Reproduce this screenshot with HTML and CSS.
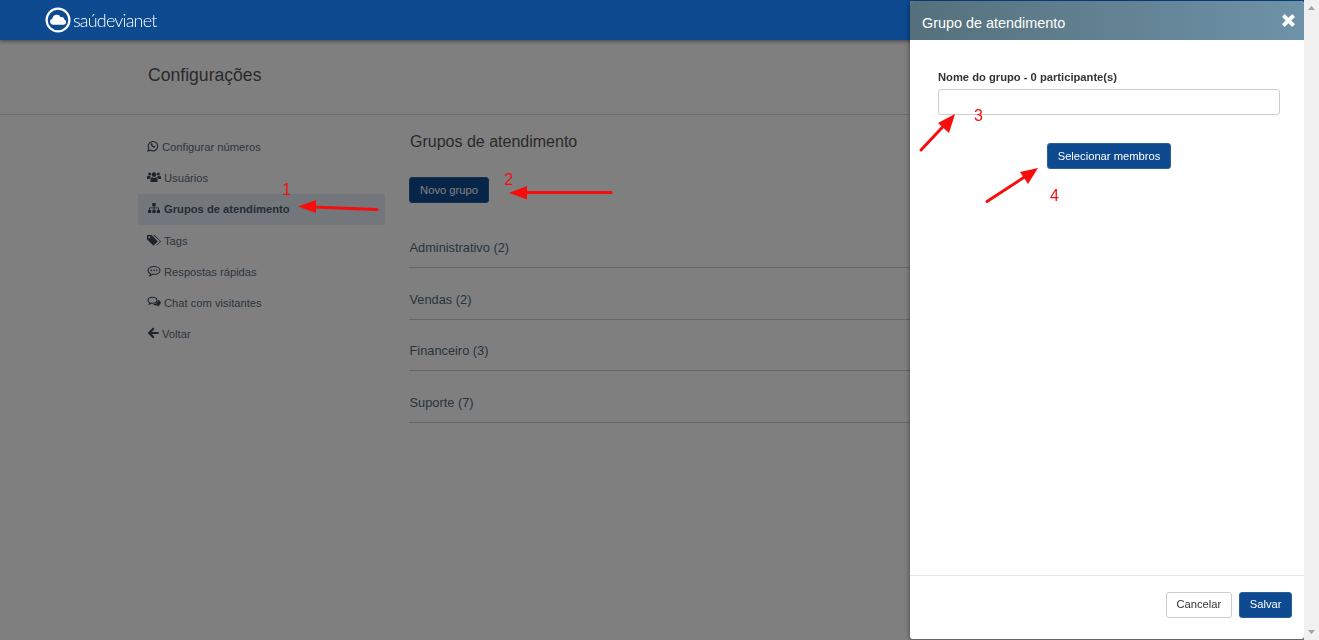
FILE: index.html
```html
<!DOCTYPE html>
<html lang="pt">
<head>
<meta charset="utf-8">
<title>Grupos de atendimento</title>
<link rel="stylesheet" href="styles.css">
</head>
<body>
<div class="app">
  <header class="navbar">
    <div class="logo">
      <svg class="logo-mark" viewBox="0 0 26 26"><circle cx="13" cy="13" r="11.4" fill="none" stroke="#fff" stroke-width="2.200"/><path fill="#fff" d="M8 17.800a3.100 3.100 0 0 1-.6-6.100 4.400 4.400 0 0 1 8.300-1.500 3 3 0 0 1 3.700 2.200 2.800 2.800 0 0 1-.6 5.400z"/></svg>
      <span class="logo-text">saúdevianet</span>
    </div>
  </header>
  <section class="page-head"><h1 class="page-title">Configurações</h1></section>
  <div class="content">
    <nav class="sidebar">
      <a class="side-item"><svg class="ico ico-w" viewBox="0 0 12 12"><path fill="none" stroke="currentColor" stroke-width="1.100" d="M1 11l.8-2.700A4.700 4.700 0 1 1 3.600 10.200z"/><path fill="currentColor" d="M4.300 3.300c-.9.700-.6 1.900.4 3 1 1.100 2.200 1.700 3.100 1.100.5-.4.500-.9.300-1.100L7.100 5.700l-.5.500c-.5-.2-1.100-.8-1.300-1.300l.4-.5-.6-1.100z"/></svg>Configurar números</a>
      <a class="side-item"><svg class="ico ico-u" viewBox="0 0 14 12"><circle cx="7" cy="3.600" r="2.300" fill="currentColor"/><circle cx="2.700" cy="3" r="1.500" fill="currentColor"/><circle cx="11.300" cy="3" r="1.500" fill="currentColor"/><path fill="currentColor" d="M3.500 11V8.500C3.500 7 4.500 6.300 5.300 6.300c.5.400 1 .6 1.700.6s1.200-.2 1.700-.6c.8 0 1.800.7 1.800 2.200V11zM0 8V6.200C0 5 .8 4.800 1.300 4.800c.4.300.8.500 1.400.5.300 0 .5 0 .7-.1.100.5.300.9.600 1.200C3.100 6.800 2.700 7.300 2.600 8zM14 8V6.200C14 5 13.200 4.800 12.700 4.800c-.4.300-.8.500-1.400.5-.3 0-.5 0-.7-.1-.1.500-.3.900-.6 1.200.8.400 1.200.9 1.300 1.600z"/></svg>Usuários</a>
      <a class="side-item is-active"><svg class="ico ico-u" viewBox="0 0 14 12"><path fill="currentColor" d="M5.300 1h3.400v3.200H7.500V5.500h4.300V8H13v3H9.800V8H11V6.300H7.500V8h1.200v3H5.300V8h1.200V6.300H3V8h1.200v3H1V8h1.200V5.500h4.300V4.200H5.300z"/></svg>Grupos de atendimento</a>
      <a class="side-item"><svg class="ico ico-u" viewBox="0 0 14 12"><path fill="currentColor" fill-rule="evenodd" d="M0 1h4.500l5.700 5.700a1 1 0 0 1 0 1.400l-3 3a1 1 0 0 1-1.400 0L0 5.500zM2.200 2.200a1 1 0 1 0 .01 0z"/><path fill="currentColor" d="M6 1h1.400l6 5.700a1 1 0 0 1 0 1.400l-3.100 3a1 1 0 0 1-1 .2l3-3a1.300 1.300 0 0 0 0-1.800z"/></svg>Tags</a>
      <a class="side-item"><svg class="ico ico-u" viewBox="0 0 14 12"><path fill="none" stroke="currentColor" stroke-width="1.100" d="M7 1.500c3.300 0 6 1.700 6 3.900s-2.700 3.900-6 3.900l-1.200-.1C5 10 4 10.400 2.800 10.600c.5-.6.800-1.300.8-1.900C2 8 1 6.800 1 5.400 1 3.200 3.700 1.500 7 1.500z"/><circle cx="4.300" cy="5.400" r=".8" fill="currentColor"/><circle cx="7" cy="5.400" r=".8" fill="currentColor"/><circle cx="9.700" cy="5.400" r=".8" fill="currentColor"/></svg>Respostas rápidas</a>
      <a class="side-item"><svg class="ico ico-u" viewBox="0 0 14 12"><path fill="none" stroke="currentColor" stroke-width="1.100" d="M5.500 1.200C8 1.200 10 2.500 10 4.200S8 7.200 5.500 7.200l-1-.1C3.900 7.700 3 8 2.200 8.100c.3-.4.500-.9.600-1.400C1.700 6.200 1 5.300 1 4.200c0-1.700 2-3 4.500-3z"/><path fill="currentColor" d="M11.200 4.100c1.500.5 2.500 1.500 2.500 2.700 0 1-.7 1.900-1.700 2.400.1.500.3.900.6 1.300-.9-.1-1.700-.5-2.300-1l-1 .1c-1.400 0-2.600-.5-3.400-1.200 2.700 0 5.100-1.500 5.300-4.300z"/></svg>Chat com visitantes</a>
      <a class="side-item"><svg class="ico ico-w" viewBox="0 0 12 12"><path fill="currentColor" d="M6 .6l1.500 1.500-2.700 2.800h6.800v2.200H4.800l2.700 2.800L6 11.400.6 6z"/></svg>Voltar</a>
    </nav>
    <main class="main">
      <h2 class="main-title">Grupos de atendimento</h2>
      <button class="btn btn-dim" type="button">Novo grupo</button>
      <ul class="groups">
        <li class="group">Administrativo (2)</li>
        <li class="group">Vendas (2)</li>
        <li class="group">Financeiro (3)</li>
        <li class="group">Suporte (7)</li>
      </ul>
    </main>
  </div>
</div>

<div class="backdrop"></div>

<aside class="modal">
  <div class="modal-head">
    <span class="modal-title">Grupo de atendimento</span>
    <svg class="close" viewBox="0 0 12 12"><path fill="#fff" d="M3.200.6L6 3.400 8.800.6a1 1 0 0 1 1.400 0l1.200 1.200a1 1 0 0 1 0 1.400L8.600 6l2.800 2.800a1 1 0 0 1 0 1.400l-1.200 1.200a1 1 0 0 1-1.400 0L6 8.600l-2.800 2.800a1 1 0 0 1-1.400 0L.6 10.200a1 1 0 0 1 0-1.400L3.400 6 .6 3.200a1 1 0 0 1 0-1.400L1.800.6a1 1 0 0 1 1.400 0z"/></svg>
  </div>
  <div class="modal-body">
    <label class="field-label">Nome do grupo - 0 participante(s)</label>
    <input class="field" type="text">
    <div class="center"><button class="btn btn-primary" type="button">Selecionar membros</button></div>
  </div>
  <div class="modal-foot">
    <button class="btn btn-light btn-foot" type="button">Cancelar</button>
    <button class="btn btn-primary btn-foot btn-save" type="button">Salvar</button>
  </div>
</aside>

<div class="scrollbar">
  <svg class="sb-arrow" viewBox="0 0 9 6"><path fill="#a3a3a3" d="M4.500 1L8 5H1z"/></svg>
  <svg class="sb-arrow" viewBox="0 0 9 6"><path fill="#a3a3a3" d="M4.500 5L8 1H1z"/></svg>
</div>

<svg class="arrows" viewBox="0 0 1319 640">
  <g fill="#f80d0d" stroke="#f80d0d">
    <path fill="none" stroke-width="3" stroke-linecap="round" d="M377 209.500L312 207"/>
    <path stroke="none" d="M298 206.500l18-6.500v13z"/>
    <path fill="none" stroke-width="3" stroke-linecap="round" d="M611 192.500H522"/>
    <path stroke="none" d="M509 193l18-7v13.500z"/>
    <path fill="none" stroke-width="3" stroke-linecap="round" d="M921 150l24-25.500"/>
    <path stroke="none" d="M955 114l-6 19-11-10z"/>
    <path fill="none" stroke-width="3" stroke-linecap="round" d="M987 201.500l39-25.500"/>
    <path stroke="none" d="M1038 168l-10 16-8-12z"/>
  </g>
</svg>
<span class="num num-1">1</span>
<span class="num num-2">2</span>
<span class="num num-3">3</span>
<span class="num num-4">4</span>
</body>
</html>
```
FILE: styles.css
```css
* { box-sizing: border-box; }
html, body { margin: 0; height: 100%; overflow: hidden; }
body { font-family: "Liberation Sans", Arial, sans-serif; background: #fff; color: #333; }
.app { height: 640px; }

.navbar { position: relative; z-index: 3; height: 40px; background: #0d4a90; box-shadow: 0 1px 4px rgba(0,0,0,.5); padding-left: 45px; display: flex; align-items: center; }
.logo { display: flex; align-items: center; gap: 2px; margin-top: -1px; }
.logo-mark { width: 26px; height: 26px; }
.logo-text { font-family: Lato, sans-serif; font-weight: 300; font-size: 18px; letter-spacing: -.82px; color: #fff; }

.page-head { height: 75px; padding: 25px 0 0 148px; border-bottom: 1px solid #ddd; }
.page-title { margin: 0; font-size: 17.600px; line-height: 20px; font-weight: 400; color: #555; }

.content { display: flex; padding: 16px 0 0 138px; }
.sidebar { width: 247px; flex: none; margin-right: 24px; padding-top: .5px; }
.side-item { display: flex; align-items: center; height: 31.200px; padding: 0 0 0 9px; font-size: 11.200px; color: #5a6c7c; }
.ico { flex: none; color: #3a4a58; }
.ico-w { width: 12px; height: 12px; margin: -2px 3px 0 0; }
.ico-u { width: 14px; height: 12px; margin: -2px 3px 0 0; }
.side-item.is-active { background: #e6eff6; color: #4a5a6a; font-weight: 700; }

.main { width: 900px; padding-top: 1px; }
.main-title { margin: 0; padding-left: 1px; font-size: 16px; line-height: 20px; font-weight: 400; color: #555; }
.btn { font-family: inherit; font-size: 11.200px; border-radius: 3px; height: 26px; padding: 0 10px 1px; border: 1px solid transparent; }
.btn-dim { margin-top: 25px; background: #0d4a90; border-color: #2a6098; color: #fff; width: 80px; }
.groups { list-style: none; margin: 13.300px 0 0; padding: 0; }
.group { height: 51.670px; display: flex; align-items: center; padding: 13.500px 0 2px .5px; font-size: 12.800px; color: #4f6a7a; border-bottom: 1px solid #ccc; }

.backdrop { position: fixed; inset: 40px 0 0 0; z-index: 2; background: rgba(0,0,0,.5); }

.modal { position: fixed; z-index: 4; top: 1px; left: 910px; width: 394px; height: 638px; display: flex; flex-direction: column; background: #fff; border-radius: 3px; box-shadow: 0 0 5px rgba(0,0,0,.5); }
.modal-head { height: 39px; flex: none; display: flex; align-items: center; justify-content: space-between; padding: 5px 9px 0 12px; background: linear-gradient(90deg, #55707c, #6e92a8); border-radius: 3px 3px 0 0; }
.modal-title { font-size: 14.400px; color: #fff; }
.close { width: 13px; height: 13px; margin-top: -5px; }
.modal-body { flex: 1; padding: 30px 24px 0 28px; }
.field-label { display: block; font-size: 11.200px; line-height: 14px; font-weight: 700; color: #333; margin-bottom: 5px; }
.field { display: block; width: 100%; height: 26px; border: 1px solid #ccc; border-radius: 3px; background: #fff; }
.center { display: flex; justify-content: center; margin-top: 28px; }
.btn-primary { background: #0d4a90; border-color: #2a6098; color: #fff; }
.btn-light { background: #fff; border-color: #ccc; color: #333; }
.btn-foot { padding-bottom: 3px; }
.btn-save { padding-left: 9.500px; padding-right: 9.500px; }
.modal-foot { flex: none; height: 64px; border-top: 1px solid #e5e5e5; display: flex; justify-content: flex-end; align-items: flex-start; gap: 7px; padding: 16px 12px 0 0; }

.scrollbar { position: fixed; z-index: 4; top: 0; right: 0; bottom: 0; width: 15px; background: #f1f1f1; display: flex; flex-direction: column; justify-content: space-between; align-items: center; padding: 5px 0; }
.sb-arrow { width: 9px; height: 6px; }

.arrows { position: fixed; inset: 0; width: 1319px; height: 640px; z-index: 5; pointer-events: none; }
.num { position: fixed; z-index: 5; font-size: 16px; line-height: 18px; color: #f80d0d; }
.num-1 { left: 282px; top: 181px; }
.num-2 { left: 504px; top: 171px; }
.num-3 { left: 974px; top: 107px; }
.num-4 { left: 1050px; top: 187px; }
```
